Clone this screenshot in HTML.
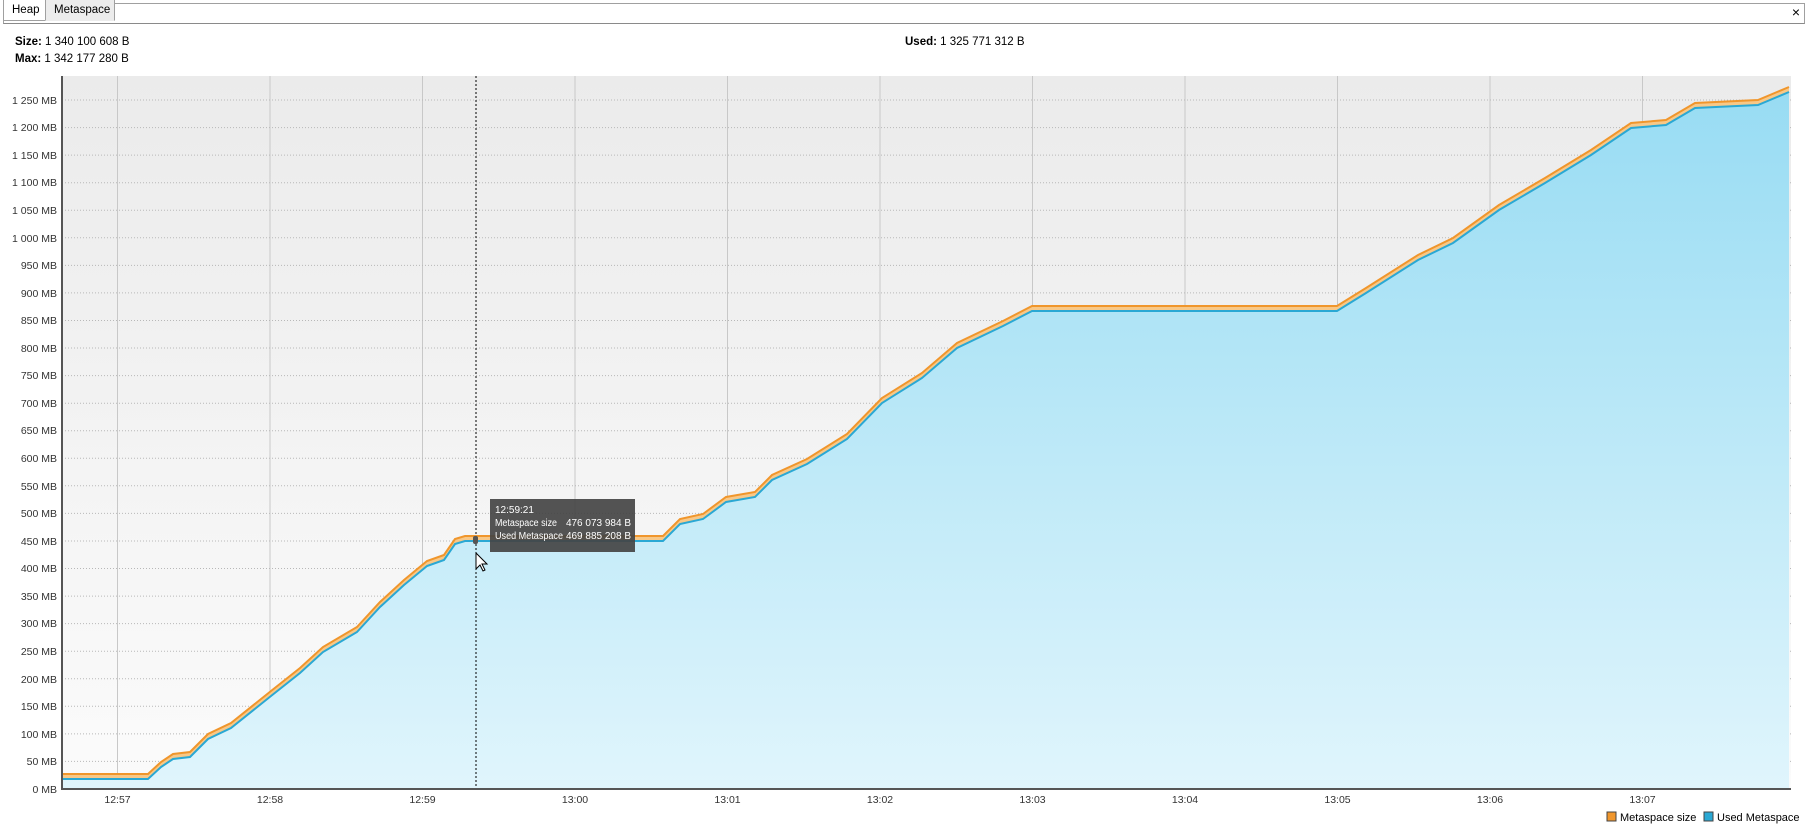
<!DOCTYPE html>
<html><head><meta charset="utf-8"><style>
body{margin:0;width:1808px;height:830px;background:#fff;font-family:"Liberation Sans",Arial,sans-serif;font-size:12px;color:#000;position:relative;overflow:hidden}
.tabbar{position:absolute;left:3px;right:3px;top:3px;height:21px;border:1px solid #a0a0a0;border-bottom:1px solid #8a8a8a;background:#fff;box-sizing:border-box}
.tab{position:absolute;top:-1px;height:22px;line-height:20px;padding:0 8px;box-sizing:border-box;border:1px solid #a0a0a0;background:#fff;font-size:11.5px}
.lbl{position:absolute;font-size:11.5px}
b{font-weight:bold}
</style></head><body>
<div class="tabbar"></div>
<div class="tab" style="left:3px;width:43px">Heap</div>
<div class="tab" style="left:45px;width:70px;background:#ececec;border-bottom-color:#ececec">Metaspace</div>
<div class="lbl" style="right:8px;top:4px;font-size:14px">×</div>
<div class="lbl" style="left:15px;top:36px"><b>Size:</b> 1 340 100 608 B</div>
<div class="lbl" style="left:15px;top:53px"><b>Max:</b> 1 342 177 280 B</div>
<div class="lbl" style="left:905px;top:36px"><b>Used:</b> 1 325 771 312 B</div>
<svg width="1808" height="830" style="position:absolute;left:0;top:0" font-family="Liberation Sans, Arial, sans-serif" font-size="10.5">
<defs>
<linearGradient id="bg" x1="0" y1="0" x2="0" y2="1"><stop offset="0" stop-color="#ebebeb"/><stop offset="1" stop-color="#fbfbfb"/></linearGradient>
<linearGradient id="bl" x1="0" y1="0" x2="0" y2="1"><stop offset="0" stop-color="#98dcf3"/><stop offset="1" stop-color="#e0f5fc"/></linearGradient>
</defs>
<rect x="62" y="76" width="1729" height="713" fill="url(#bg)"/>
<g stroke="#c8c8c8" stroke-width="1">
<line x1="117.5" y1="76" x2="117.5" y2="789"/><line x1="270" y1="76" x2="270" y2="789"/><line x1="422.5" y1="76" x2="422.5" y2="789"/><line x1="575" y1="76" x2="575" y2="789"/><line x1="727.5" y1="76" x2="727.5" y2="789"/><line x1="880" y1="76" x2="880" y2="789"/><line x1="1032.5" y1="76" x2="1032.5" y2="789"/><line x1="1185" y1="76" x2="1185" y2="789"/><line x1="1337.5" y1="76" x2="1337.5" y2="789"/><line x1="1490" y1="76" x2="1490" y2="789"/><line x1="1642.5" y1="76" x2="1642.5" y2="789"/>
</g>
<g stroke="#b8b8b8" stroke-dasharray="1,2">
<line x1="62" y1="761.4" x2="1791" y2="761.4"/><line x1="62" y1="733.9" x2="1791" y2="733.9"/><line x1="62" y1="706.3" x2="1791" y2="706.3"/><line x1="62" y1="678.8" x2="1791" y2="678.8"/><line x1="62" y1="651.2" x2="1791" y2="651.2"/><line x1="62" y1="623.6" x2="1791" y2="623.6"/><line x1="62" y1="596.1" x2="1791" y2="596.1"/><line x1="62" y1="568.5" x2="1791" y2="568.5"/><line x1="62" y1="541" x2="1791" y2="541"/><line x1="62" y1="513.4" x2="1791" y2="513.4"/><line x1="62" y1="485.8" x2="1791" y2="485.8"/><line x1="62" y1="458.3" x2="1791" y2="458.3"/><line x1="62" y1="430.7" x2="1791" y2="430.7"/><line x1="62" y1="403.2" x2="1791" y2="403.2"/><line x1="62" y1="375.6" x2="1791" y2="375.6"/><line x1="62" y1="348" x2="1791" y2="348"/><line x1="62" y1="320.5" x2="1791" y2="320.5"/><line x1="62" y1="292.9" x2="1791" y2="292.9"/><line x1="62" y1="265.4" x2="1791" y2="265.4"/><line x1="62" y1="237.8" x2="1791" y2="237.8"/><line x1="62" y1="210.2" x2="1791" y2="210.2"/><line x1="62" y1="182.7" x2="1791" y2="182.7"/><line x1="62" y1="155.1" x2="1791" y2="155.1"/><line x1="62" y1="127.6" x2="1791" y2="127.6"/><line x1="62" y1="100" x2="1791" y2="100"/>
</g>
<g transform="translate(0,1)">
<polygon fill="#f8c887" points="63,773 148,773 161,761 173,753 190,751 208,733 231,722 271,690 300,667 323,646 357,626 380,601 404,579 427,560 444,554 455,538 465,535 663,535 680,518 703,513 726,496 755,491 772,474 807,458 847,433 882,397 922,372 957,342 1003,320 1032,305 1337,305 1366,287 1418,254 1453,237 1499,204 1545,177 1591,149 1631,122 1666,119 1695,102 1758,99 1789,86 1789,92 1758,105 1695,108 1666,125 1631,128 1591,155 1545,183 1499,210 1453,243 1418,260 1366,293 1337,311 1032,311 1003,326 957,348 922,378 882,403 847,439 807,464 772,480 755,497 726,502 703,519 680,524 663,541 465,541 455,544 444,560 427,566 404,585 380,607 357,632 323,652 300,673 271,696 231,728 208,739 190,757 173,759 161,767 148,779 63,779"/>
<polyline fill="none" stroke="#f0962c" stroke-width="2" points="63,773 148,773 161,761 173,753 190,751 208,733 231,722 271,690 300,667 323,646 357,626 380,601 404,579 427,560 444,554 455,538 465,535 663,535 680,518 703,513 726,496 755,491 772,474 807,458 847,433 882,397 922,372 957,342 1003,320 1032,305 1337,305 1366,287 1418,254 1453,237 1499,204 1545,177 1591,149 1631,122 1666,119 1695,102 1758,99 1789,86"/>
</g>
<polygon fill="url(#bl)" points="63,779 148,779 161,767 173,759 190,757 208,739 231,728 271,696 300,673 323,652 357,632 380,607 404,585 427,566 444,560 455,544 465,541 663,541 680,524 703,519 726,502 755,497 772,480 807,464 847,439 882,403 922,378 957,348 1003,326 1032,311 1337,311 1366,293 1418,260 1453,243 1499,210 1545,183 1591,155 1631,128 1666,125 1695,108 1758,105 1789,92 1789,789 63,789"/>
<polyline fill="none" stroke="#2aa8d4" stroke-width="2" points="63,779 148,779 161,767 173,759 190,757 208,739 231,728 271,696 300,673 323,652 357,632 380,607 404,585 427,566 444,560 455,544 465,541 663,541 680,524 703,519 726,502 755,497 772,480 807,464 847,439 882,403 922,378 957,348 1003,326 1032,311 1337,311 1366,293 1418,260 1453,243 1499,210 1545,183 1591,155 1631,128 1666,125 1695,108 1758,105 1789,92"/>
<line x1="476" y1="76" x2="476" y2="789" stroke="#000" stroke-dasharray="2,2"/>
<rect x="473" y="536" width="5" height="8" rx="2" fill="#555"/>
<g stroke="#555" stroke-width="2"><line x1="62" y1="76" x2="62" y2="789"/><line x1="61" y1="789" x2="1791" y2="789"/></g>
<g fill="#333" text-anchor="end">
<text x="57" y="793">0 MB</text><text x="57" y="765">50 MB</text><text x="57" y="738">100 MB</text><text x="57" y="710">150 MB</text><text x="57" y="683">200 MB</text><text x="57" y="655">250 MB</text><text x="57" y="627">300 MB</text><text x="57" y="600">350 MB</text><text x="57" y="572">400 MB</text><text x="57" y="545">450 MB</text><text x="57" y="517">500 MB</text><text x="57" y="490">550 MB</text><text x="57" y="462">600 MB</text><text x="57" y="434">650 MB</text><text x="57" y="407">700 MB</text><text x="57" y="379">750 MB</text><text x="57" y="352">800 MB</text><text x="57" y="324">850 MB</text><text x="57" y="297">900 MB</text><text x="57" y="269">950 MB</text><text x="57" y="214">1 050 MB</text><text x="57" y="242">1 000 MB</text><text x="57" y="186">1 100 MB</text><text x="57" y="159">1 150 MB</text><text x="57" y="131">1 200 MB</text><text x="57" y="104">1 250 MB</text>
</g>
<g fill="#333" text-anchor="middle">
<text x="117.5" y="803">12:57</text><text x="270" y="803">12:58</text><text x="422.5" y="803">12:59</text><text x="575" y="803">13:00</text><text x="727.5" y="803">13:01</text><text x="880" y="803">13:02</text><text x="1032.5" y="803">13:03</text><text x="1185" y="803">13:04</text><text x="1337.5" y="803">13:05</text><text x="1490" y="803">13:06</text><text x="1642.5" y="803">13:07</text>
</g>
<rect x="490" y="499" width="145" height="53" fill="#444" opacity="0.92"/>
<g fill="#fff" font-size="10"><text x="495" y="513">12:59:21</text><text x="495" y="526" textLength="62" lengthAdjust="spacingAndGlyphs">Metaspace size</text><text x="631" y="526" text-anchor="end">476 073 984 B</text><text x="495" y="539" textLength="68" lengthAdjust="spacingAndGlyphs">Used Metaspace</text><text x="631" y="539" text-anchor="end">469 885 208 B</text></g>
<path d="M476 553 v16 l4 -4 l3 6 l2 -1 l-3 -6 h5 z" fill="#fff" stroke="#000" stroke-width="1"/>
<rect x="1607" y="812" width="9" height="9" fill="#f0962c" stroke="#444"/>
<text x="1620" y="821" font-size="11" fill="#000">Metaspace size</text>
<rect x="1704" y="812" width="9" height="9" fill="#2aa8d4" stroke="#444"/>
<text x="1717" y="821" font-size="11" fill="#000">Used Metaspace</text>
</svg>
</body></html>
